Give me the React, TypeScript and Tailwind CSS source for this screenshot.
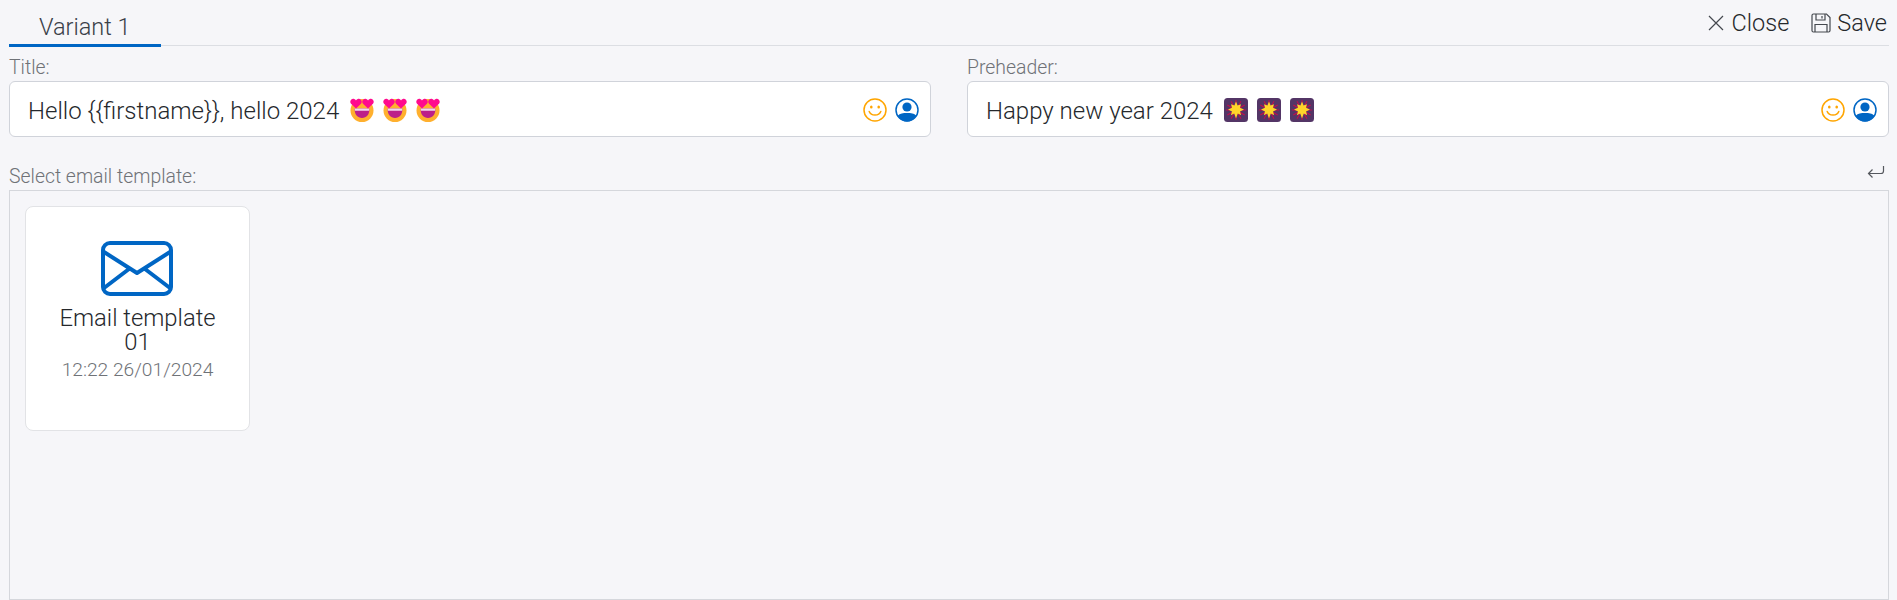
import React from "react";

const font = { fontFamily: 'Roboto, "Open Sans", sans-serif' };

function HeartEyes() {
  return (
    <svg width="24" height="24" viewBox="0 0 24 24" className="shrink-0">
      <circle cx="12" cy="12.5" r="11.5" fill="#FFB02E" />
      <path d="M4.6 10.5 H19.4 C19.6 16.5 16.5 20 12 20 C7.5 20 4.4 16.5 4.6 10.5 Z" fill="#BC2089" />
      <path d="M4.7 10.5 H19.3 L19.2 12.8 H4.8 Z" fill="#F0D8EC" />
      <path d="M6 10.4 L1 5.8 C-1 3.4 1.4 0 4.2 1 C5 1.3 5.6 1.8 6 2.5 C6.4 1.8 7 1.3 7.8 1 C10.6 0 13 3.4 11 5.8 Z" fill="#FF0A8E" />
      <path d="M18 10.4 L13 5.8 C11 3.4 13.4 0 16.2 1 C17 1.3 17.6 1.8 18 2.5 C18.4 1.8 19 1.3 19.8 1 C22.6 0 25 3.4 23 5.8 Z" fill="#FF0A8E" />
    </svg>
  );
}

function Firework() {
  const rays = [0, 30, 60, 90, 120, 150, 180, 210, 240, 270, 300, 330];
  return (
    <svg width="24" height="24" viewBox="0 0 24 24" className="shrink-0">
      <rect x="0" y="0" width="24" height="24" rx="3.5" fill="#533566" />
      {rays.map((a) => (
        <line key={a} x1="12" y1="12" x2="12" y2="2" stroke="#CA0B4A" strokeWidth="1" transform={`rotate(${a} 12 12)`} />
      ))}
      <path
        d="M12 3.5 L13.6 7.6 L17 6.2 L16 9.8 L20 11.5 L16 13.4 L17.2 17.2 L13.8 15.4 L12 20.5 L10.2 15.4 L6.8 17.2 L8 13.4 L4 11.5 L8 9.8 L7 6.2 L10.4 7.6 Z"
        fill="#FFD42A"
      />
    </svg>
  );
}

function Smile() {
  return (
    <svg width="24" height="24" viewBox="0 0 24 24" fill="none" className="shrink-0">
      <circle cx="12" cy="12" r="11" stroke="#FFA500" strokeWidth="1.5" />
      <ellipse cx="8.3" cy="9" rx="1.3" ry="1.6" fill="#FFA500" />
      <ellipse cx="15.7" cy="9" rx="1.3" ry="1.6" fill="#FFA500" />
      <path d="M6.2 13.5 C8 18.3 16 18.3 17.8 13.5" stroke="#FFA500" strokeWidth="1.5" strokeLinecap="round" />
    </svg>
  );
}

function Person() {
  return (
    <svg width="24" height="24" viewBox="0 0 24 24" fill="none" className="shrink-0">
      <circle cx="12" cy="12" r="11" fill="#fff" stroke="#0066C4" strokeWidth="1.5" />
      <circle cx="12" cy="9" r="4.6" fill="#0066C4" />
      <path d="M2.6 18 C5 15.2 8 15 12 15 C16 15 19 15.2 21.4 18 C19.4 21.4 16 23.6 12 23.6 C8 23.6 4.6 21.4 2.6 18 Z" fill="#0066C4" />
    </svg>
  );
}

function Field({ label, text, emoji }: { label: string; text: string; emoji: React.ReactNode }) {
  return (
    <div className="flex-1 min-w-0 flex flex-col">
      <div className="h-[26px] text-[19.4px] leading-[23px] pt-[1px] font-light text-[#6f7277]">{label}</div>
      <div className="h-[56px] flex items-center pl-[18px] pr-[11px] bg-white border border-[#d0d3da] rounded-[6px]">
        <span className="text-[24px] leading-[30px] pt-[4px] font-light text-[#25282c] whitespace-pre">{text}</span>
        <span className="flex items-center gap-[9px] ml-[11px] pt-[2px]">{emoji}</span>
        <span className="ml-auto flex items-center gap-[8px] pt-[2px]">
          <Smile />
          <Person />
        </span>
      </div>
    </div>
  );
}

export default function App() {
  return (
    <div style={font} className="h-[600px] overflow-hidden bg-[#f6f6f9] pl-[9px] pr-[8px] flex flex-col">
      <div className="h-[46px] shrink-0 flex items-start justify-between border-b border-[#dcdee3]">
        <div className="w-[152px] h-[47px] border-b-[3px] border-[#0066c4] pl-[30px] pt-[13px] text-[23.5px] leading-[28px] font-light text-[#3a4048]">
          Variant 1
        </div>
        <div className="flex items-center gap-[22px] pt-[9px] pr-[2px] text-[23.5px] leading-[28px] font-light text-[#25282c]">
          <span className="flex items-center gap-[8px]">
            <svg width="16" height="16" viewBox="0 0 16 16" fill="none" stroke="#44484e" strokeWidth="1.2">
              <path d="M1 1 L15 15 M15 1 L1 15" />
            </svg>
            Close
          </span>
          <span className="flex items-center gap-[6px]">
            <svg width="20" height="20" viewBox="0 0 20 20" fill="none" stroke="#44484e" strokeWidth="1.2">
              <path d="M1 2.5 C1 1.5 1.5 1 2.5 1 H15.5 L19 4.5 V17.5 C19 18.5 18.5 19 17.5 19 H2.5 C1.5 19 1 18.5 1 17.5 Z" />
              <path d="M5 1 V7 H14 V1 M11 3 V5.5" />
              <path d="M4 19 V11.5 H16 V19" />
            </svg>
            Save
          </span>
        </div>
      </div>
      <div className="flex gap-[36px] mt-[9px] shrink-0">
        <Field label="Title:" text="Hello {{firstname}}, hello 2024" emoji={<><HeartEyes /><HeartEyes /><HeartEyes /></>} />
        <Field label="Preheader:" text="Happy new year 2024" emoji={<><Firework /><Firework /><Firework /></>} />
      </div>
      <div className="mt-[25px] h-[28px] shrink-0 flex items-center justify-between">
        <span className="text-[19.4px] pt-[2px] font-light text-[#6f7277]">Select email template:</span>
        <svg width="18" height="14" viewBox="0 0 18 14" fill="none" stroke="#55585e" strokeWidth="1.2" className="mr-[4px] mb-[8px]">
          <path d="M16.5 1 V6 C16.5 7.5 15.5 8.5 14 8.5 H1.5 M5.5 4.5 L1.5 8.5 L5.5 12.5" />
        </svg>
      </div>
      <div className="flex-1 border border-[#d5d7dc] pt-[15px] px-[15px]">
        <div className="w-[225px] h-[225px] bg-white border border-[#e2e3e6] rounded-[8px] flex flex-col items-center pt-[34px]">
          <svg width="72" height="55" viewBox="0 0 72 55" fill="none" stroke="#0066c4" strokeWidth="4" className="mr-[1px]">
            <rect x="2" y="2" width="68" height="51" rx="7" />
            <path d="M3 11 L36 32 L69 11 M3 47 L28 28 M69 47 L44 28" strokeLinejoin="round" />
          </svg>
          <div className="mt-[10px] w-[170px] text-center text-[23.8px] leading-[24px] font-light text-[#25282c]">Email template 01</div>
          <div className="mt-[4px] text-[19.2px] leading-[24px] font-light text-[#6f7277]">12:22 26/01/2024</div>
        </div>
      </div>
    </div>
  );
}
